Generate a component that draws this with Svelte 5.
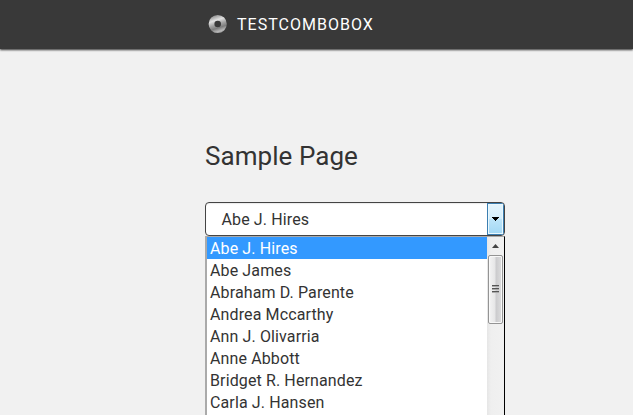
<script>
  const names = [
    'Abe J. Hires',
    'Abe James',
    'Abraham D. Parente',
    'Andrea Mccarthy',
    'Ann J. Olivarria',
    'Anne Abbott',
    'Bridget R. Hernandez',
    'Carla J. Hansen'
  ];
  let selected = $state(0);
</script>

<div class="page">
  <header>
    <svg class="logo" width="20" height="20" viewBox="0 0 20 20">
      <defs>
        <linearGradient id="ring" gradientUnits="userSpaceOnUse" x1="7" y1="1" x2="13" y2="19">
          <stop offset="0" stop-color="#8c8c8c" />
          <stop offset="0.28" stop-color="#e0e0e0" />
          <stop offset="0.5" stop-color="#a4a4a4" />
          <stop offset="0.7" stop-color="#7c7c7c" />
          <stop offset="0.88" stop-color="#b8b8b8" />
          <stop offset="1" stop-color="#999" />
        </linearGradient>
      </defs>
      <circle cx="9.7" cy="10" r="6.2" fill="none" stroke="url(#ring)" stroke-width="5.8" />
    </svg>
    <span class="brand">TESTCOMBOBOX</span>
  </header>
  <main>
    <h1>Sample Page</h1>
    <div class="combo">
      <div class="field">
        <span class="value">{names[selected]}</span>
        <button class="drop" aria-label="Open list">
          <svg width="7" height="4" viewBox="0 0 7 4"><path d="M0 0h7v1H6v1H5v1H4v1H3V3H2V2H1V1H0z" fill="#000" /></svg>
        </button>
      </div>
      <div class="list">
        <div class="options">
          {#each names as name, i}
            <button class="option" class:active={i === selected} onclick={() => (selected = i)}>{name}</button>
          {/each}
        </div>
        <div class="scroll">
          <svg class="up" width="7" height="4" viewBox="0 0 7 4"><path d="M0 4h7L3.5 0z" fill="#444" /></svg>
          <div class="thumb"><i></i><i></i><i></i></div>
        </div>
      </div>
    </div>
  </main>
</div>

<style>
  .page {
    height: 415px;
    overflow: hidden;
    background: #f1f1f1;
    font-family: Roboto, sans-serif;
    font-size: 16px;
    color: #333;
  }
  header {
    box-sizing: border-box;
    height: 49px;
    padding: 0 0 1px 208px;
    display: flex;
    align-items: center;
    background: #393939;
    box-shadow: 0 1px 2px rgba(0, 0, 0, 0.8);
  }
  .brand {
    padding-top: 1px;
    margin-left: 9px;
    color: #fff;
    letter-spacing: 1.02px;
    line-height: 21px;
  }
  main {
    padding: 90px 0 0 205px;
  }
  h1 {
    margin: 0 0 28px;
    font-size: 26px;
    font-weight: 400;
    line-height: 35px;
    letter-spacing: 0.05px;
  }
  .combo {
    width: 300px;
    letter-spacing: 0.12px;
  }
  .field {
    box-sizing: border-box;
    height: 34px;
    display: flex;
    justify-content: space-between;
    border: 1px solid #444;
    border-radius: 4px;
    background: #fff;
    box-shadow: inset 0 1px 1px rgba(0, 0, 0, 0.08);
    overflow: hidden;
  }
  .value {
    padding-left: 15.5px;
    line-height: 34px;
  }
  .drop {
    box-sizing: border-box;
    width: 17px;
    padding: 0;
    display: flex;
    align-items: center;
    justify-content: center;
    border: 1px solid #3c7fb1;
    box-shadow: inset 0 0 0 1px #eaf8fe;
    background: linear-gradient(#e5f5fd 0%, #d5effc 48%, #bce4f9 52%, #a2d8f5 100%);
  }
  .list {
    box-sizing: border-box;
    height: 240px;
    display: flex;
    border: solid #aaa;
    border-width: 1px 1px 0 2px;
    border-right-color: #000;
    background: #fff;
  }
  .options {
    flex: 1;
  }
  .option {
    box-sizing: border-box;
    display: block;
    width: 100%;
    height: 22px;
    padding: 1px 0 0 3px;
    border: 0;
    background: #fff;
    color: #333;
    font: inherit;
    letter-spacing: inherit;
    line-height: 22px;
    text-align: left;
  }
  .option.active {
    background: #39f;
    color: #fff;
  }
  .scroll {
    width: 17px;
    display: flex;
    flex-direction: column;
    align-items: center;
    background: linear-gradient(90deg, #e6e6e6, #efefef 4px, #f1f1f1);
  }
  .up {
    margin: 7px 0;
  }
  .thumb {
    box-sizing: border-box;
    width: 15px;
    height: 69px;
    padding-bottom: 2px;
    display: flex;
    flex-direction: column;
    align-items: center;
    justify-content: center;
    gap: 1px;
    border: 1px solid #949494;
    border-radius: 2px;
    box-shadow: inset 0 0 0 1px #f8f8f8;
    background: linear-gradient(90deg, #f4f4f4 0%, #e6e6e7 45%, #cbcbcd 55%, #dededf 100%);
  }
  .thumb i {
    width: 7px;
    height: 1px;
    background: #555;
    border-bottom: 1px solid #aaa;
  }
</style>
